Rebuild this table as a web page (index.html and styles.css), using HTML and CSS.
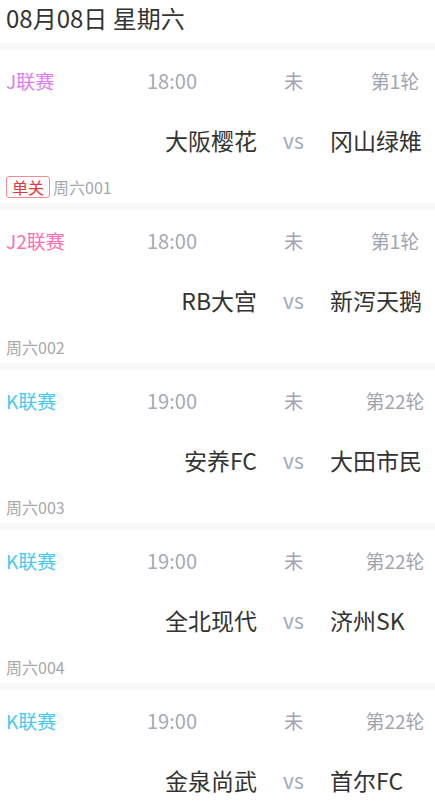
FILE: index.html
```html
<!DOCTYPE html>
<html lang="zh-CN">
<head>
    <meta charset="UTF-8">
    <meta name="viewport" content="width=device-width, initial-scale=1.0">
    <title>赛程</title>
    <link rel="stylesheet" href="styles.css">
</head>
<body>
    <!-- Date header -->
    <div class="date-header">08月08日 星期六</div>

    <div class="match-list">
        <div class="match">
            <div class="match-grid">
                <span class="league league-j">J联赛</span>
                <span class="time">18:00</span>
                <span class="status">未</span>
                <span class="round">第1轮</span>
                <span class="home">大阪樱花</span>
                <span class="vs">vs</span>
                <span class="away">冈山绿雉</span>
            </div>
            <div class="match-foot">
                <span class="tag">单关</span>
                <span class="code">周六001</span>
            </div>
        </div>

        <div class="match">
            <div class="match-grid">
                <span class="league league-j2">J2联赛</span>
                <span class="time">18:00</span>
                <span class="status">未</span>
                <span class="round">第1轮</span>
                <span class="home">RB大宫</span>
                <span class="vs">vs</span>
                <span class="away">新泻天鹅</span>
            </div>
            <div class="match-foot">
                <span class="code">周六002</span>
            </div>
        </div>

        <div class="match">
            <div class="match-grid">
                <span class="league league-k">K联赛</span>
                <span class="time">19:00</span>
                <span class="status">未</span>
                <span class="round">第22轮</span>
                <span class="home">安养FC</span>
                <span class="vs">vs</span>
                <span class="away">大田市民</span>
            </div>
            <div class="match-foot">
                <span class="code">周六003</span>
            </div>
        </div>

        <div class="match">
            <div class="match-grid">
                <span class="league league-k">K联赛</span>
                <span class="time">19:00</span>
                <span class="status">未</span>
                <span class="round">第22轮</span>
                <span class="home">全北现代</span>
                <span class="vs">vs</span>
                <span class="away">济州SK</span>
            </div>
            <div class="match-foot">
                <span class="code">周六004</span>
            </div>
        </div>

        <div class="match">
            <div class="match-grid">
                <span class="league league-k">K联赛</span>
                <span class="time">19:00</span>
                <span class="status">未</span>
                <span class="round">第22轮</span>
                <span class="home">金泉尚武</span>
                <span class="vs">vs</span>
                <span class="away">首尔FC</span>
            </div>
        </div>
    </div>
</body>
</html>
```

FILE: styles.css
```css
body {
    font-family: "Noto Sans CJK SC", "Noto Sans", sans-serif;
    background-color: #ffffff;
    margin: 0;
    color: #333;
}
.date-header {
    height: 43px;
    line-height: 35px;
    padding-left: 6px;
    font-size: 24px;
    color: #333;
    box-sizing: border-box;
}
.match-list {
    display: flex;
    flex-direction: column;
    gap: 7px;
    padding-top: 7px;
    background-color: #f7f8fa;
}
.match {
    background-color: #ffffff;
    height: 153px;
    padding: 0 6px;
}
.match-grid {
    display: grid;
    grid-template-columns: 116px 100px 35px 73px 31px 68px;
    grid-template-rows: 60px 60px;
    align-items: center;
}
.league { grid-column: 1; font-size: 19px; }
.league-j { color: #dc7bf0; }
.league-j2 { color: #ff6cb4; }
.league-k { color: #45c9f2; }
.time { grid-column: 2; text-align: center; font-size: 20px; color: #a4a9b6; }
.status { grid-column: 4; text-align: center; font-size: 19px; color: #a0a4ad; }
.round { grid-column: 6; text-align: center; font-size: 19px; color: #a0a4ad; }
.home { grid-column: 1 / 4; grid-row: 2; text-align: right; font-size: 23px; color: #333; }
.vs { grid-column: 4; grid-row: 2; text-align: center; font-size: 21px; color: #a2a9ba; }
.away { grid-column: 5 / 7; grid-row: 2; font-size: 23px; color: #333; }
.match-foot {
    height: 33px;
    display: flex;
    align-items: center;
    gap: 3px;
}
.tag {
    font-size: 16px;
    line-height: 20px;
    color: #e8353d;
    border: 1px solid #f08c8f;
    border-radius: 3px;
    padding: 0 5px;
}
.code { font-size: 16px; color: #a6a8ae; }
```
